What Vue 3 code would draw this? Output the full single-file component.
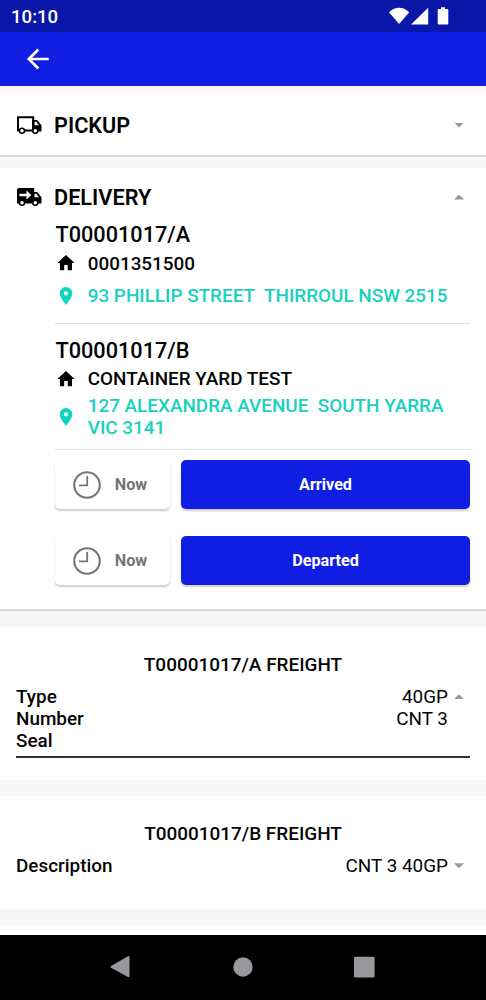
<script setup>
const stops = [
  { id: 'T00001017/A', name: '0001351500', address: ['93 PHILLIP STREET\u00a0 THIRROUL NSW 2515'] },
  { id: 'T00001017/B', name: 'CONTAINER YARD TEST', address: ['127 ALEXANDRA AVENUE\u00a0 SOUTH YARRA', 'VIC 3141'] },
]
const actions = ['Arrived', 'Departed']
</script>

<template>
  <div class="screen">
    <div class="status">
      <span class="time">10:10</span>
      <svg class="status-icons" width="62" height="20" viewBox="0 0 62 20">
        <path d="M0 6.200Q10 -2.600 20.200 6.200L10.100 18Z" />
        <path d="M22 18.600L39.200 1.700V18.600Z" />
        <path d="M52 1.200h4v1.700h2.200q1.100 0 1.100 1.100v13.500q0 1.100-1.100 1.100h-8.400q-1.100 0-1.100-1.100V4q0-1.100 1.100-1.100H52z" />
      </svg>
    </div>
    <header class="appbar">
      <svg width="24" height="24" viewBox="0 0 24 24" fill="none" stroke="#fff" stroke-width="2.7">
        <path d="M12.300 2.500L2.800 12L12.300 21.500M2.800 12H22.800" />
      </svg>
    </header>

    <main class="content">
      <section class="card pickup">
        <div class="heading">
          <svg class="truck" width="26" height="20" viewBox="0 0 26 20">
            <path fill="none" stroke="#000" stroke-width="2" d="M6 15.500H2V2.200H17.200V15.500M9 15.500H17" />
            <path fill-rule="evenodd" d="M17 5h4l4.500 5.200V16.500H16V5zM18.500 6.700v3.500h4.400l-2.600-3.500z" />
            <circle cx="6" cy="15.8" r="2.5" /><circle cx="19.3" cy="15.8" r="2.5" />
          </svg>
          <h2>PICKUP</h2>
          <i class="caret down"></i>
        </div>
      </section>

      <section class="card delivery">
        <div class="heading">
          <svg class="truck" width="26" height="20" viewBox="0 0 26 20">
            <path fill-rule="evenodd" d="M3 1H18.200V5H21l4.500 5.300V16.500H1V3Q1 1 3 1zM18.500 6.700v3.500h4.400l-2.600-3.500z" />
            <path class="arrow" d="M3.500 6.800h7V3.500L15.400 8l-4.900 4.500V9.200h-7z" />
            <circle cx="6" cy="15.8" r="2.5" /><circle cx="19.3" cy="15.8" r="2.5" />
          </svg>
          <h2>DELIVERY</h2>
          <i class="caret up"></i>
        </div>
        <div class="details">
          <article v-for="(s, i) in stops" :key="s.id" class="stop" :class="{ second: i === 1 }">
            <h3>{{ s.id }}</h3>
            <div class="row name">
              <svg width="18" height="16" viewBox="0 0 18 16"><path d="M9 0L17.6 8H15V15.3H10.7V10H7.2V15.3H2.9V8H.3Z" /></svg>
              <span>{{ s.name }}</span>
            </div>
            <div class="row address">
              <svg width="18" height="18" viewBox="0 0 18 18"><path fill-rule="evenodd" d="M9 0a6.300 6.300 0 0 1 6.300 6.200C15.300 10.500 9 17.800 9 17.800S2.700 10.500 2.700 6.200A6.300 6.300 0 0 1 9 0zM9 4.200a2.100 2.100 0 1 0 0 4.200a2.100 2.100 0 0 0 0-4.200z" /></svg>
              <span><span v-for="l in s.address" :key="l" class="line">{{ l }}</span></span>
            </div>
          </article>
          <div v-for="a in actions" :key="a" class="actions">
            <button class="now">
              <svg width="28" height="28" viewBox="0 0 28 28" fill="none" stroke="#757575">
                <circle cx="14" cy="14" r="12.800" stroke-width="2.100" />
                <path stroke-width="1.800" d="M14.200 5V14.400H6" />
              </svg>
              <span>Now</span>
            </button>
            <button class="primary">{{ a }}</button>
          </div>
        </div>
      </section>

      <section class="card freight first">
        <h4>T00001017/A FREIGHT</h4>
        <dl>
          <div><dt>Type</dt><dd>40GP</dd><i class="caret up"></i></div>
          <div><dt>Number</dt><dd>CNT 3</dd></div>
          <div><dt>Seal</dt><dd></dd></div>
        </dl>
        <hr>
      </section>

      <section class="card freight last">
        <h4>T00001017/B FREIGHT</h4>
        <dl>
          <div><dt>Description</dt><dd>CNT 3 40GP</dd><i class="caret down"></i></div>
        </dl>
      </section>
      <section class="card rest"></section>
    </main>

    <nav class="navbar">
      <svg width="22" height="24" viewBox="0 0 22 24"><path d="M1 11L18 1.200Q19.500.500 19.500 2V21.200Q19.500 22.700 18 22L1 12.700Q0 11.800 1 11Z" /></svg>
      <svg width="22" height="24" viewBox="0 0 22 24"><circle cx="11" cy="12" r="9.700" /></svg>
      <svg width="22" height="24" viewBox="0 0 22 24"><rect x="1" y="1.800" width="20.600" height="20.600" rx="1.500" /></svg>
    </nav>
  </div>
</template>

<style>
body { margin: 0; }
</style>

<style scoped>
* { box-sizing: border-box; }
.screen {
  width: 486px; height: 1000px; overflow: hidden;
  display: flex; flex-direction: column;
  background: #f7f6f9; color: #050505;
  font-family: Roboto, "Liberation Sans", sans-serif;
}
h2, h3, h4, dl, dd { margin: 0; }
svg { display: block; flex: none; }
.status {
  height: 32px; flex: none; background: #0a17a8; color: #fff;
  display: flex; justify-content: space-between; align-items: flex-start;
  padding: 6px 35px 0 11px;
}
.time { font-size: 18.600px; line-height: 22px; font-weight: 500; }
.status-icons { fill: #fff; }
.appbar { height: 54px; flex: none; background: #101de2; padding: 15px 25.500px; }
.content { flex: 1; min-height: 0; }
.card { background: #fff; }
.pickup { height: 71px; margin-bottom: 11px; padding-top: 24px; border-bottom: 2px solid #d9d9d9; background: linear-gradient(#f8f6f6, #fff 12px); }
.delivery { height: 443px; margin-bottom: 16px; padding-top: 14px; border-bottom: 2px solid #d9d9d9; }
.heading { display: flex; align-items: center; height: 30px; padding: 0 22px 0 16px; }
.heading h2 { flex: 1; margin-left: 12px; padding-top: 2px; font-size: 21.700px; line-height: 30px; font-weight: 600; }
.truck circle { fill: #fff; stroke: #000; stroke-width: 1.500; }
.truck .arrow { fill: #fff; }
.caret { width: 10px; height: 5px; background: #999; flex: none; }
.down { clip-path: polygon(0 0, 100% 0, 50% 100%); }
.up { clip-path: polygon(50% 0, 100% 100%, 0 100%); }
.details { margin: 0 16px 0 55px; }
.stop { height: 111.500px; padding-top: 10px; border-bottom: 1.500px solid #e0e0e0; }
.second { height: 126px; padding-top: 14.200px; border-bottom-width: 1px; }
h3 { font-size: 21.700px; line-height: 26px; font-weight: 500; padding-left: .5px; }
.row { display: flex; align-items: center; padding-left: 2px; font-size: 18.900px; font-weight: 500; }
.row > span { margin-left: 12.700px; }
.name { height: 32px; margin-top: -1px; }
.address { height: 33px; color: #18d1bf; fill: #10d5c2; }
.second .address { height: 44px; }
.address > span { padding-top: .5px; }
.line { display: block; line-height: 21.600px; white-space: nowrap; }
.actions { display: flex; gap: 11px; height: 49px; margin-top: 10.500px; margin-bottom: 27px; }
button { border: 0; border-radius: 5px; font: 700 16.200px Roboto, sans-serif; box-shadow: 0 2px 2px rgba(0,0,0,.2); padding: 0; }
.actions + .actions { margin-top: 0; }
.now { width: 115px; background: #fff; color: #757575; display: flex; align-items: center; padding-left: 18.300px; gap: 13.500px; }
.primary { flex: 1; background: #101de2; color: #fff; }
.freight { padding: 27px 16px 0; margin-bottom: 16px; }
.first { height: 153px; }
.last { height: 113px; }
h4 { text-align: center; font-size: 18.950px; line-height: 22px; font-weight: 500; margin-bottom: 10px; }
dl > div { display: flex; align-items: center; height: 21.700px; font-size: 18.900px; padding-right: 6px; }
dt { flex: 1; font-weight: 500; }
dd { margin-right: 6px; }
dd:last-child { margin-right: 16px; }
hr { border: 0; height: 2px; background: #303035; margin: 4.700px 0 0; }
.rest { height: 10px; }
.navbar { height: 65px; flex: none; background: #000; fill: #99979b; display: flex; justify-content: space-between; align-items: flex-start; padding: 20px 111px 0 110px; }
</style>
